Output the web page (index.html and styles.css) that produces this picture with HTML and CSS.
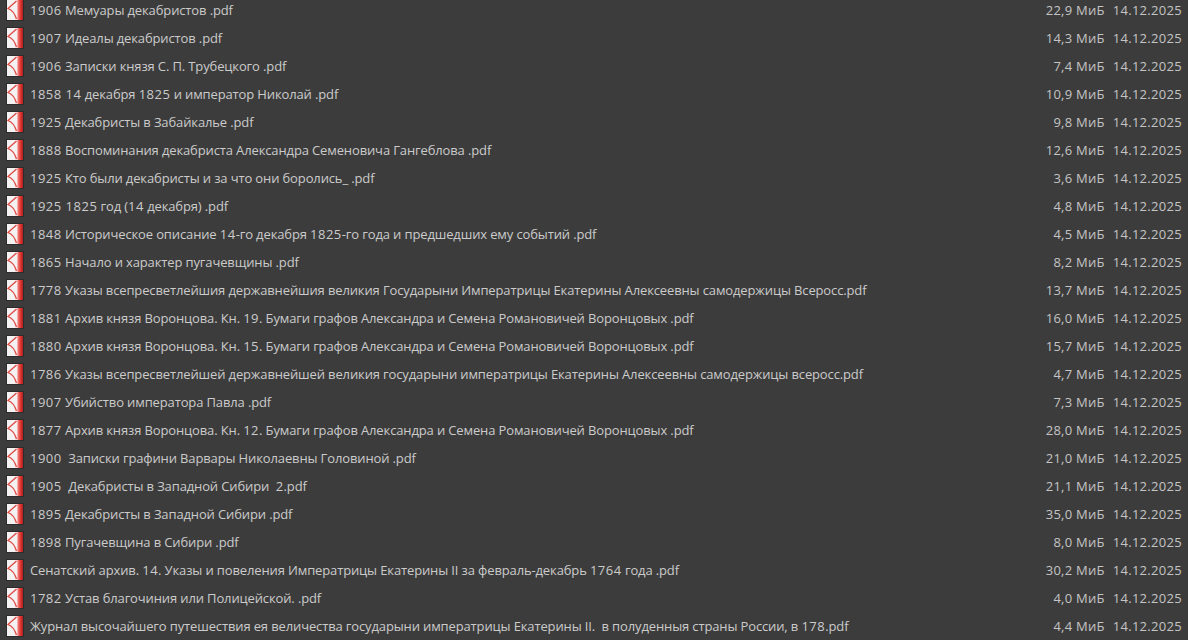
FILE: index.html
```html
<!DOCTYPE html>
<html>
<head>
    <meta charset="UTF-8">
    <title>files</title>
    <link rel="stylesheet" href="styles.css">
</head>
<body>
    <svg class="defs" width="0" height="0">
        <defs>
            <linearGradient id="strip" x1="0" x2="1" y1="0" y2="0">
                <stop offset="0" stop-color="#fbeeee"/>
                <stop offset="0.35" stop-color="#ea5e58"/>
                <stop offset="0.7" stop-color="#d92f2c"/>
                <stop offset="1" stop-color="#a82422"/>
            </linearGradient>
        </defs>
        <symbol id="pdf" viewBox="0 0 16 20">
            <rect width="16" height="20" fill="#f4f2f2"/>
            <rect x="9.500" width="6.500" height="20" fill="url(#strip)"/>
            <path d="M9.500 1L1 8.500C5 10 8 14 9.500 19" fill="none" stroke="#e04a45" stroke-width="1.300"/>
        </symbol>
    </svg>
    <ul class="files">
        <li><svg class="icon"><use href="#pdf"/></svg><span class="name"><span class="n">1906</span> Мемуары декабристов .pdf</span><span class="size">22,9 МиБ</span><span class="date">14.12.2025</span></li>
        <li><svg class="icon"><use href="#pdf"/></svg><span class="name"><span class="n">1907</span> Идеалы декабристов .pdf</span><span class="size">14,3 МиБ</span><span class="date">14.12.2025</span></li>
        <li><svg class="icon"><use href="#pdf"/></svg><span class="name"><span class="n">1906</span> Записки князя С. П. Трубецкого .pdf</span><span class="size">7,4 МиБ</span><span class="date">14.12.2025</span></li>
        <li><svg class="icon"><use href="#pdf"/></svg><span class="name"><span class="n">1858 14</span> декабря <span class="n">1825</span> и император Николай .pdf</span><span class="size">10,9 МиБ</span><span class="date">14.12.2025</span></li>
        <li><svg class="icon"><use href="#pdf"/></svg><span class="name"><span class="n">1925</span> Декабристы в Забайкалье .pdf</span><span class="size">9,8 МиБ</span><span class="date">14.12.2025</span></li>
        <li><svg class="icon"><use href="#pdf"/></svg><span class="name"><span class="n">1888</span> Воспоминания декабриста Александра Семеновича Гангеблова .pdf</span><span class="size">12,6 МиБ</span><span class="date">14.12.2025</span></li>
        <li><svg class="icon"><use href="#pdf"/></svg><span class="name"><span class="n">1925</span> Кто были декабристы и за что они боролись_ .pdf</span><span class="size">3,6 МиБ</span><span class="date">14.12.2025</span></li>
        <li><svg class="icon"><use href="#pdf"/></svg><span class="name"><span class="n">1925 1825</span> год (<span class="n">14</span> декабря) .pdf</span><span class="size">4,8 МиБ</span><span class="date">14.12.2025</span></li>
        <li><svg class="icon"><use href="#pdf"/></svg><span class="name"><span class="n">1848</span> Историческое описание <span class="n">14</span>-го декабря <span class="n">1825</span>-го года и предшедших ему событий .pdf</span><span class="size">4,5 МиБ</span><span class="date">14.12.2025</span></li>
        <li><svg class="icon"><use href="#pdf"/></svg><span class="name"><span class="n">1865</span> Начало и характер пугачевщины .pdf</span><span class="size">8,2 МиБ</span><span class="date">14.12.2025</span></li>
        <li><svg class="icon"><use href="#pdf"/></svg><span class="name"><span class="n">1778</span> Указы всепресветлейшия державнейшия великия Государыни Императрицы Екатерины Алексеевны самодержицы Всеросс.pdf</span><span class="size">13,7 МиБ</span><span class="date">14.12.2025</span></li>
        <li><svg class="icon"><use href="#pdf"/></svg><span class="name"><span class="n">1881</span> Архив князя Воронцова. Кн. <span class="n">19</span>. Бумаги графов Александра и Семена Романовичей Воронцовых .pdf</span><span class="size">16,0 МиБ</span><span class="date">14.12.2025</span></li>
        <li><svg class="icon"><use href="#pdf"/></svg><span class="name"><span class="n">1880</span> Архив князя Воронцова. Кн. <span class="n">15</span>. Бумаги графов Александра и Семена Романовичей Воронцовых .pdf</span><span class="size">15,7 МиБ</span><span class="date">14.12.2025</span></li>
        <li><svg class="icon"><use href="#pdf"/></svg><span class="name"><span class="n">1786</span> Указы всепресветлейшей державнейшей великия государыни императрицы Екатерины Алексеевны самодержицы всеросс.pdf</span><span class="size">4,7 МиБ</span><span class="date">14.12.2025</span></li>
        <li><svg class="icon"><use href="#pdf"/></svg><span class="name"><span class="n">1907</span> Убийство императора Павла .pdf</span><span class="size">7,3 МиБ</span><span class="date">14.12.2025</span></li>
        <li><svg class="icon"><use href="#pdf"/></svg><span class="name"><span class="n">1877</span> Архив князя Воронцова. Кн. <span class="n">12</span>. Бумаги графов Александра и Семена Романовичей Воронцовых .pdf</span><span class="size">28,0 МиБ</span><span class="date">14.12.2025</span></li>
        <li><svg class="icon"><use href="#pdf"/></svg><span class="name"><span class="n">1900</span>  Записки графини Варвары Николаевны Головиной .pdf</span><span class="size">21,0 МиБ</span><span class="date">14.12.2025</span></li>
        <li><svg class="icon"><use href="#pdf"/></svg><span class="name"><span class="n">1905</span>  Декабристы в Западной Сибири  <span class="n">2</span>.pdf</span><span class="size">21,1 МиБ</span><span class="date">14.12.2025</span></li>
        <li><svg class="icon"><use href="#pdf"/></svg><span class="name"><span class="n">1895</span> Декабристы в Западной Сибири .pdf</span><span class="size">35,0 МиБ</span><span class="date">14.12.2025</span></li>
        <li><svg class="icon"><use href="#pdf"/></svg><span class="name"><span class="n">1898</span> Пугачевщина в Сибири .pdf</span><span class="size">8,0 МиБ</span><span class="date">14.12.2025</span></li>
        <li><svg class="icon"><use href="#pdf"/></svg><span class="name">Сенатский архив. <span class="n">14</span>. Указы и повеления Императрицы Екатерины II за февраль-декабрь <span class="n">1764</span> года .pdf</span><span class="size">30,2 МиБ</span><span class="date">14.12.2025</span></li>
        <li><svg class="icon"><use href="#pdf"/></svg><span class="name"><span class="n">1782</span> Устав благочиния или Полицейской. .pdf</span><span class="size">4,0 МиБ</span><span class="date">14.12.2025</span></li>
        <li><svg class="icon"><use href="#pdf"/></svg><span class="name">Журнал высочайшего путешествия ея величества государыни императрицы Екатерины II.  в полуденныя страны России, в <span class="n">178</span>.pdf</span><span class="size">4,4 МиБ</span><span class="date">14.12.2025</span></li>
    </ul>
</body>
</html>
```

FILE: styles.css
```css
* {
    padding: 0;
    margin: 0;
}
html, body {
    height: 640px;
    overflow: hidden;
}
body {
    background: #3c3c3c;
    color: #cbcbcb;
    font-family: "Open Sans", "Noto Sans", sans-serif;
    font-size: 13px;
}
.defs {
    display: block;
}
.files {
    list-style: none;
    margin-top: -4px;
}
.files li {
    display: flex;
    align-items: center;
    height: 28px;
    padding: 0 6px 0 7px;
}
.icon {
    width: 16px;
    height: 20px;
    flex: none;
    margin-right: 7px;
    box-shadow: 0 0 0 1px #2c2c2c;
}
.name {
    flex: 1;
    white-space: pre;
    letter-spacing: -0.13px;
}
.n {
    letter-spacing: 0.5px;
}
.size {
    color: #c4c4c4;
    margin-right: 8px;
    letter-spacing: 0.25px;
}
.date {
    color: #c4c4c4;
    letter-spacing: 0.3px;
}
```
